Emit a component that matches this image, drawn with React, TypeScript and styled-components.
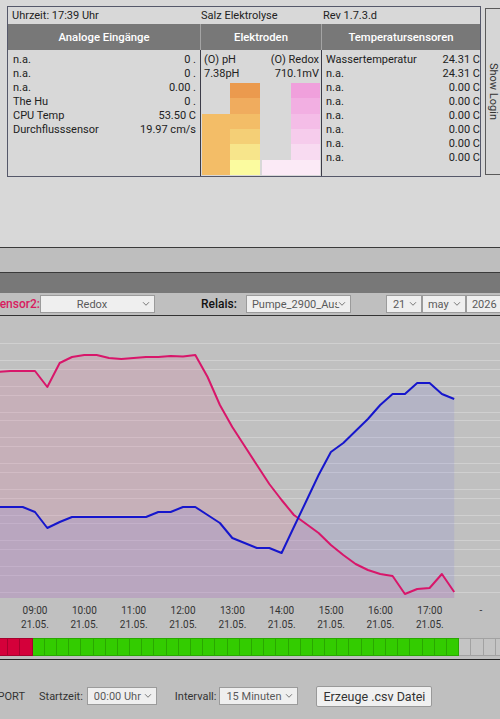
import React from "react";
import styled, { createGlobalStyle } from "styled-components";

const GlobalStyle = createGlobalStyle`
  html, body { margin: 0; padding: 0; }
  body {
    width: 500px;
    height: 719px;
    overflow: hidden;
    background: #bfbfbf;
    font-family: Roboto, "Noto Sans", "Liberation Sans", sans-serif;
    color: #222;
  }
  * { box-sizing: border-box; }
`;

const Page = styled.div`
  width: 500px;
  overflow: hidden;
`;

/* ---------- top status panel ---------- */
const TopArea = styled.div`
  height: 248px;
  background: #d8d8d8;
  border-bottom: 1px solid #3a3a3a;
  display: flex;
  align-items: flex-start;
  padding: 6px 0 0 7px;
`;

const Panel = styled.div`
  flex: 0 0 474px;
  width: 474px;
  border: 1px solid #55586a;
  display: grid;
  grid-template-columns: 192px 121px 159px;
  grid-template-rows: 17px 26px 126px;
`;

const InfoCell = styled.div<{ $pl: number }>`
  font-size: 11px;
  line-height: 17px;
  color: #222;
  padding-left: ${(p) => p.$pl}px;
  white-space: nowrap;
`;

const HeadCell = styled.div<{ $sep?: boolean }>`
  background: #787878;
  color: #fff;
  font-weight: 500;
  font-size: 11.3px;
  display: flex;
  align-items: center;
  justify-content: center;
  border-left: ${(p) => (p.$sep ? "1px solid #a4a4a4" : "none")};
`;

const BodyCell = styled.div<{ $sep?: boolean }>`
  border-left: ${(p) => (p.$sep ? "1px solid #3c3c48" : "none")};
  padding-top: 3px;
  overflow: hidden;
`;

const ValueRow = styled.div<{ $pl: number; $pr: number }>`
  display: flex;
  justify-content: space-between;
  font-size: 11px;
  line-height: 14px;
  color: #222;
  white-space: nowrap;
  padding: 0 ${(p) => p.$pr}px 0 ${(p) => p.$pl}px;
`;

const Bars = styled.div`
  display: flex;
  height: 92px;
  margin-top: 2px;
  padding-left: 1px;
`;

const BarGroup = styled.div<{ $ml: number }>`
  display: flex;
  margin-left: ${(p) => p.$ml}px;
`;

const BarCol = styled.div<{ $w: number }>`
  width: ${(p) => p.$w}px;
  display: flex;
  flex-direction: column;
`;

const BarCell = styled.div<{ $c: string }>`
  flex: 1;
  background: ${(p) => p.$c};
`;

const ShowLogin = styled.div`
  flex: 0 0 16px;
  align-self: flex-start;
  margin: 2px 0 0 4px;
  width: 16px;
  height: 167px;
  border: 1px solid #5a5a5a;
  background: #d6d6d6;
  display: flex;
  align-items: center;
  justify-content: center;
`;

const VerticalText = styled.span`
  writing-mode: vertical-rl;
  font-size: 11px;
  color: #333;
  white-space: nowrap;
`;

/* ---------- bands + controls ---------- */
const MidBand = styled.div`
  height: 25px;
  background: #bebebe;
  border-bottom: 1px solid #3a3a3a;
`;

const DarkBand = styled.div`
  height: 20px;
  background: #787878;
`;

const ControlsRow = styled.div`
  height: 23px;
  background: #bfbfbf;
  border-bottom: 1px solid #333;
  display: flex;
  align-items: center;
  white-space: nowrap;
`;

const ClipLabel = styled.div<{ $w: number; $color: string; $weight: number; $size: number }>`
  width: ${(p) => p.$w}px;
  flex: 0 0 ${(p) => p.$w}px;
  display: flex;
  justify-content: flex-end;
  font-size: ${(p) => p.$size}px;
  font-weight: ${(p) => p.$weight};
  color: ${(p) => p.$color};
  white-space: nowrap;
`;

const Label = styled.span<{ $ml: number; $weight?: number; $color?: string; $size?: number }>`
  margin-left: ${(p) => p.$ml}px;
  font-size: ${(p) => p.$size ?? 11}px;
  font-weight: ${(p) => p.$weight ?? 400};
  color: ${(p) => p.$color ?? "#333"};
`;

const SelectBox = styled.div<{ $w: number; $ml: number; $align: string; $pl: number; $pr: number }>`
  position: relative;
  flex: 0 0 ${(p) => p.$w}px;
  width: ${(p) => p.$w}px;
  margin-left: ${(p) => p.$ml}px;
  height: 18px;
  background: #efefef;
  border: 1px solid #9b9b9b;
  display: flex;
  align-items: center;
  padding: 0 ${(p) => p.$pr}px 0 ${(p) => p.$pl}px;
  font-size: 11px;
  color: #5a5a5a;
  overflow: hidden;
  & > span {
    flex: 1;
    overflow: hidden;
    text-align: ${(p) => p.$align};
    white-space: nowrap;
  }
`;

const ChevronMark = styled.svg`
  position: absolute;
  right: 3px;
  top: 5px;
  background: #efefef;
  padding: 0 1px;
`;

const Chevron = () => (
  <ChevronMark width="10" height="6" viewBox="0 0 10 6">
    <path d="M1.3 0.8 L5 4.6 L8.7 0.8" fill="none" stroke="#666" strokeWidth="1.1" />
  </ChevronMark>
);

const Select: React.FC<{
  w: number;
  ml: number;
  text: string;
  align?: string;
  pl?: number;
  pr?: number;
  chevron?: boolean;
}> = ({ w, ml, text, align = "left", pl = 5, pr = 0, chevron = true }) => (
  <SelectBox $w={w} $ml={ml} $align={align} $pl={pl} $pr={pr}>
    <span>{text}</span>
    {chevron && <Chevron />}
  </SelectBox>
);

/* ---------- chart ---------- */
const ChartWrap = styled.div`
  height: 320px;
  background: #c0c0c0;
  & > svg { display: block; }
`;

const pinkY = [
  372, 371, 371, 371, 387, 363, 357, 355, 355, 358, 359, 358, 357, 357, 356, 356.5, 355, 377, 405, 427, 446, 465,
  484, 500, 515, 524, 533, 545, 555, 564, 570, 574, 576, 594, 589, 588, 574, 592,
];
const blueY = [
  507, 507, 507, 512, 528, 522, 517, 517, 517, 517, 517, 517, 517, 512, 512, 507, 507, 515, 523, 538, 543, 548,
  548, 553, 527, 501, 475, 452, 443, 431, 419, 405, 394, 394, 383, 383, 394, 399,
];
const xAt = (i: number) => 35 + (i - 3) * 12.33;
const linePath = (ys: number[]) => ys.map((y, i) => `${i ? "L" : "M"}${xAt(i).toFixed(1)},${y}`).join(" ");
const areaPath = (ys: number[]) =>
  `${linePath(ys)} L${xAt(ys.length - 1).toFixed(1)},598 L${xAt(0).toFixed(1)},598 Z`;

const hours = ["09:00", "10:00", "11:00", "12:00", "13:00", "14:00", "15:00", "16:00", "17:00"];

const Chart = () => {
  const gridA = Array.from({ length: 10 }, (_, k) => 343 + 25.75 * k);
  const gridB = Array.from({ length: 10 }, (_, k) => 360 + 25.75 * k);
  return (
    <ChartWrap>
      <svg width="500" height="320" viewBox="0 316 500 320">
        {[...gridA, ...gridB].map((y) => (
          <line key={y} x1="0" x2="500" y1={Math.round(y) + 0.5} y2={Math.round(y) + 0.5} stroke="#d0d0d0" strokeWidth="1" />
        ))}
        <path d={areaPath(pinkY)} fill="rgba(220,120,160,0.22)" />
        <path d={areaPath(blueY)} fill="rgba(100,100,230,0.13)" />
        <path d={linePath(pinkY)} fill="none" stroke="#d8166a" strokeWidth="2" strokeLinejoin="round" />
        <path d={linePath(blueY)} fill="none" stroke="#1616cc" strokeWidth="2" strokeLinejoin="round" />
        <g fontFamily="Roboto, 'Noto Sans', sans-serif" fontSize="10" fill="#333" textAnchor="middle">
          {hours.map((h, i) => {
            const x = 35 + i * 49.35;
            return (
              <g key={h}>
                <text x={x} y={613.5}>{h}</text>
                <text x={x} y={627.5}>21.05.</text>
              </g>
            );
          })}
          <text x={481} y={613.5}>-</text>
        </g>
      </svg>
    </ChartWrap>
  );
};

/* ---------- legend bar ---------- */
const Legend = styled.div`
  display: flex;
  height: 18px;
  margin: 2px 0 0 -4px;
`;

const palette: Record<string, [string, string]> = {
  red: ["#d4003a", "#a6002d"],
  green: ["#33cc00", "#29a800"],
  gray: ["#c4c4c4", "#a2a2a2"],
};

const LegendCell = styled.div<{ $kind: string }>`
  flex: 0 0 12.2px;
  height: 18px;
  background: ${(p) => palette[p.$kind][0]};
  border: 1px solid ${(p) => palette[p.$kind][1]};
  border-left: none;
`;

const legendData = [
  ...Array(3).fill("red"),
  ...Array(35).fill("green"),
  ...Array(4).fill("gray"),
] as string[];

/* ---------- bottom export row ---------- */
const BottomArea = styled.div`
  margin-top: 3px;
  border-top: 1px solid #222;
  padding-top: 26px;
  height: 60px;
`;

const BottomRow = styled.div`
  display: flex;
  align-items: center;
  height: 20px;
  white-space: nowrap;
`;

const Button = styled.div`
  margin-left: 18px;
  flex: 0 0 116px;
  height: 21px;
  background: #f0f0f0;
  border: 1px solid #999;
  border-radius: 2px;
  display: flex;
  align-items: center;
  justify-content: center;
  font-size: 12.5px;
  color: #333;
`;

/* ---------- data ---------- */
const analog = [
  ["n.a.", "0 ."],
  ["n.a.", "0 ."],
  ["n.a.", "0.00 ."],
  ["The Hu", "0 ."],
  ["CPU Temp", "53.50 C"],
  ["Durchflusssensor", "19.97 cm/s"],
];

const temps = [
  ["Wassertemperatur", "24.31 C"],
  ["n.a.", "24.31 C"],
  ...Array.from({ length: 6 }, () => ["n.a.", "0.00 C"]),
];

const T = "transparent";
const phCols: { w: number; cells: string[] }[] = [
  { w: 28, cells: [T, T, "#f3bd67", "#f3bd67", "#f3bd67", "#f3bd67"] },
  { w: 30, cells: ["#eb9a4e", "#f0ac5e", "#f3bd67", "#f4cf76", "#f7e58b", "#fbfb9f"] },
];
const redoxCols: { w: number; cells: string[] }[] = [
  { w: 29, cells: [T, T, T, T, T, "#fbeaf6"] },
  { w: 29, cells: ["#f0a0dc", "#f2afe2", "#f4bde7", "#f6ccec", "#f8dbf1", "#fbeaf6"] },
];

const BarSet: React.FC<{ cols: { w: number; cells: string[] }[]; ml: number }> = ({ cols, ml }) => (
  <BarGroup $ml={ml}>
    {cols.map((c, i) => (
      <BarCol key={i} $w={c.w}>
        {c.cells.map((col, j) => (
          <BarCell key={j} $c={col} />
        ))}
      </BarCol>
    ))}
  </BarGroup>
);

export default function App() {
  return (
    <Page>
      <GlobalStyle />
      <TopArea>
        <Panel>
          <InfoCell $pl={4}>Uhrzeit: 17:39 Uhr</InfoCell>
          <InfoCell $pl={1}>Salz Elektrolyse</InfoCell>
          <InfoCell $pl={2}>Rev 1.7.3.d</InfoCell>

          <HeadCell>Analoge Eingänge</HeadCell>
          <HeadCell $sep>Elektroden</HeadCell>
          <HeadCell $sep>Temperatursensoren</HeadCell>

          <BodyCell>
            {analog.map(([k, v], i) => (
              <ValueRow key={i} $pl={5} $pr={4}>
                <span>{k}</span>
                <span>{v}</span>
              </ValueRow>
            ))}
          </BodyCell>
          <BodyCell $sep>
            <ValueRow $pl={3} $pr={2}>
              <span>(O) pH</span>
              <span>(O) Redox</span>
            </ValueRow>
            <ValueRow $pl={3} $pr={2}>
              <span>7.38pH</span>
              <span>710.1mV</span>
            </ValueRow>
            <Bars>
              <BarSet cols={phCols} ml={0} />
              <BarSet cols={redoxCols} ml={2} />
            </Bars>
          </BodyCell>
          <BodyCell $sep>
            {temps.map(([k, v], i) => (
              <ValueRow key={i} $pl={4} $pr={0}>
                <span>{k}</span>
                <span>{v}</span>
              </ValueRow>
            ))}
          </BodyCell>
        </Panel>
        <ShowLogin>
          <VerticalText>Show Login</VerticalText>
        </ShowLogin>
      </TopArea>

      <MidBand />
      <DarkBand />

      <ControlsRow>
        <ClipLabel $w={40} $color="#d81b60" $weight={500} $size={12}>
          Sensor2:
        </ClipLabel>
        <Select w={115} ml={0} text="Redox" align="center" pr={16} />
        <Label $ml={46} $weight={500} $color="#111" $size={12}>
          Relais:
        </Label>
        <Select w={105} ml={9} text="Pumpe_2900_Aus" />
        <Select w={36} ml={35} text="21" pl={6} />
        <Select w={44} ml={0} text="may" pl={5} />
        <Select w={45} ml={0} text="2026" chevron={false} />
      </ControlsRow>

      <Chart />

      <Legend>
        {legendData.map((k, i) => (
          <LegendCell key={i} $kind={k} />
        ))}
      </Legend>

      <BottomArea>
        <BottomRow>
          <ClipLabel $w={25} $color="#333" $weight={400} $size={11}>
            EXPORT
          </ClipLabel>
          <Label $ml={14}>Startzeit:</Label>
          <Select w={70} ml={4} text="00:00 Uhr" pl={6} />
          <Label $ml={18}>Intervall:</Label>
          <Select w={79} ml={3} text="15 Minuten" pl={6} />
          <Button>Erzeuge .csv Datei</Button>
        </BottomRow>
      </BottomArea>
    </Page>
  );
}
